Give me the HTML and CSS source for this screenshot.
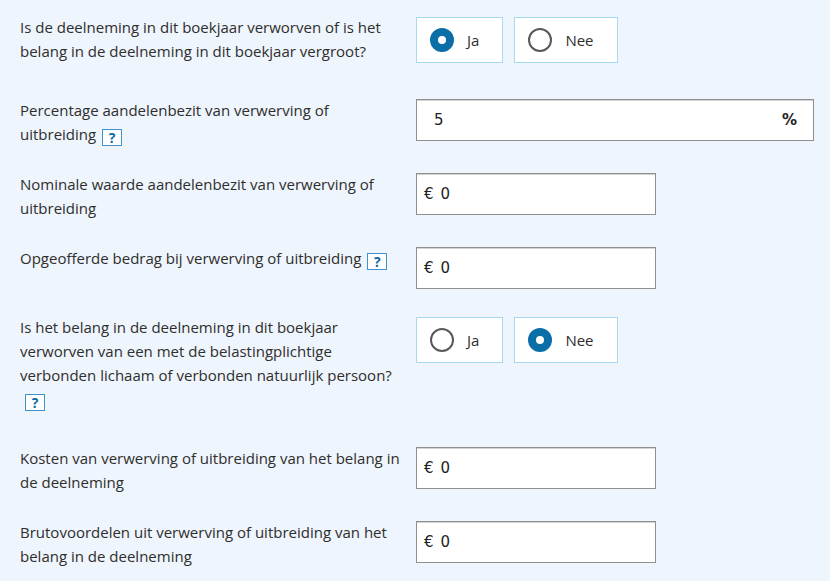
FILE: index.html
```html
<!DOCTYPE html>
<html lang="nl">
<head>
<meta charset="utf-8">
<title>Deelneming</title>
<link rel="stylesheet" href="styles.css">
</head>
<body>
<form class="form">
  <div class="row row--choice">
    <div class="label">Is de deelneming in dit boekjaar verworven of is het belang in de deelneming in dit boekjaar vergroot?</div>
    <div class="choices">
      <label class="choice"><span class="radio radio--on"></span><span class="choice-text">Ja</span></label>
      <label class="choice"><span class="radio"></span><span class="choice-text">Nee</span></label>
    </div>
  </div>

  <div class="row">
    <div class="label">Percentage aandelenbezit van verwerving of uitbreiding <span class="help">?</span></div>
    <div class="field field--wide"><span class="value value--pct">5</span><span class="unit">%</span></div>
  </div>

  <div class="row">
    <div class="label">Nominale waarde aandelenbezit van verwerving of uitbreiding</div>
    <div class="field"><span class="prefix">€</span><span class="value">0</span></div>
  </div>

  <div class="row">
    <div class="label">Opgeofferde bedrag bij verwerving of uitbreiding <span class="help">?</span></div>
    <div class="field"><span class="prefix">€</span><span class="value">0</span></div>
  </div>

  <div class="row row--choice">
    <div class="label">Is het belang in de deelneming in dit boekjaar verworven van een met de belastingplichtige verbonden lichaam of verbonden natuurlijk persoon? <span class="help help--wrapped">?</span></div>
    <div class="choices">
      <label class="choice"><span class="radio"></span><span class="choice-text">Ja</span></label>
      <label class="choice"><span class="radio radio--on"></span><span class="choice-text">Nee</span></label>
    </div>
  </div>

  <div class="row">
    <div class="label">Kosten van verwerving of uitbreiding van het belang in de deelneming</div>
    <div class="field"><span class="prefix">€</span><span class="value">0</span></div>
  </div>

  <div class="row">
    <div class="label">Brutovoordelen uit verwerving of uitbreiding van het belang in de deelneming</div>
    <div class="field"><span class="prefix">€</span><span class="value">0</span></div>
  </div>
</form>
</body>
</html>
```

FILE: styles.css
```css
html, body {
  margin: 0;
  padding: 0;
  background: #eef5fc;
}

body {
  font-family: "Open Sans", "Noto Sans", sans-serif;
  color: #2e2e2e;
  font-size: 15px;
  line-height: 24px;
}

.form {
  padding: 15px 0 0 20px;
  display: flex;
  flex-direction: column;
}

.row {
  display: flex;
  align-items: flex-start;
  gap: 11px;
  margin-bottom: 26px;
}

.row--choice {
  margin-bottom: 35px;
}

.label {
  width: 385px;
  flex: none;
}

.help {
  display: inline-block;
  box-sizing: border-box;
  width: 20px;
  height: 17px;
  margin-left: 2px;
  border: 1px solid #3f92cc;
  background: #fff;
  color: #0d6aa4;
  font-weight: 700;
  font-size: 14px;
  line-height: 15px;
  text-align: center;
  vertical-align: -3px;
}

.help--wrapped {
  margin-left: 5px;
}

.choices {
  display: flex;
  gap: 11px;
  margin-top: 2px;
}

.choice {
  display: flex;
  align-items: center;
  box-sizing: border-box;
  height: 46px;
  padding: 0 23px 0 13px;
  border: 1px solid #a9d9f2;
  background: #fff;
}

.radio {
  box-sizing: border-box;
  width: 24px;
  height: 24px;
  border-radius: 50%;
  border: 2px solid #595959;
  background: #fff;
}

.radio--on {
  border: 8px solid #0b6ea7;
}

.choice-text {
  margin-left: 13px;
}

.field {
  box-sizing: border-box;
  width: 240px;
  height: 42px;
  margin-top: 1px;
  display: flex;
  align-items: center;
  padding: 0 16px 0 7px;
  background: #fff;
  border: 1px solid #8f8f8f;
  box-shadow: inset 0 1px 0 #d4d4d4;
  font-family: "DejaVu Sans", sans-serif;
  font-size: 15px;
  color: #222;
}

.prefix {
  margin-right: 7px;
}

.field--wide {
  width: 398px;
  justify-content: space-between;
}

.value--pct {
  padding-left: 10px;
}

.unit {
  font-weight: 700;
}
```
